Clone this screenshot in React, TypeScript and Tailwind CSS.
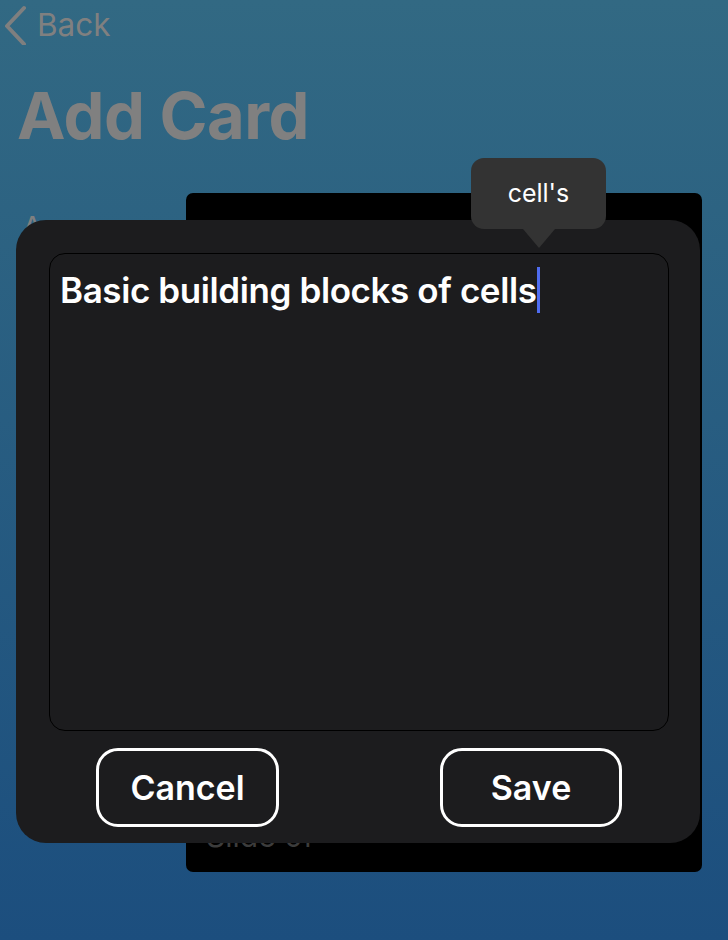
import React from "react";

export default function App() {
  return (
    <div
      className="relative w-[728px] h-[940px] overflow-hidden bg-gradient-to-b from-[#326983] to-[#1c4e7e]"
      style={{ fontFamily: "Inter, 'Noto Sans', sans-serif" }}
    >
      {/* Header */}
      <div className="flex items-center h-[48px] pl-[3px] pt-[1px]">
        <svg width="26" height="40" viewBox="0 0 26 40">
          <path d="M21 3 L4 21 L21 39" fill="none" stroke="#7f7f7f" strokeWidth="4" strokeLinecap="round" strokeLinejoin="round" />
        </svg>
        <span className="ml-[8px] text-[31.5px] leading-none text-[#808080]">Back</span>
      </div>
      <div className="pl-[17px] pt-[35px] text-[65px] font-bold leading-none text-[#808080] tracking-[-0.5px]">
        Add Card
      </div>
      <div className="pl-[22px] pt-[64px] text-[30px] text-[#808080] leading-none">A</div>

      {/* Black card behind */}
      <div className="absolute left-[186px] top-[193px] w-[516px] h-[679px] rounded-[7px] bg-black">
        <div className="absolute left-[20px] top-[628px] text-[30px] text-[#3c3c3c] leading-none">Slide 0f</div>
      </div>

      {/* Modal */}
      <div className="absolute left-[16px] top-[220px] w-[684px] h-[623px] rounded-[30px] bg-[#1c1c1e] flex flex-col pl-[33px] pr-[31px] pt-[33px]">
        <div className="h-[478px] rounded-[16px] border-[1.5px] border-black px-[10px] pt-[13px]">
          <div className="text-[35px] font-semibold text-white leading-[46px] tracking-[-0.4px]">
            Basic building blocks of cells
            <span className="inline-block align-middle w-[3px] h-[46px] bg-[#4f6cf0] -mt-[6px]" />
          </div>
        </div>
        <div className="flex justify-between pl-[47px] pr-[47px] mt-[17px]">
          <button className="w-[183px] h-[79px] rounded-[22px] border-[3px] border-white text-[34px] font-semibold text-white">
            Cancel
          </button>
          <button className="w-[182px] h-[79px] rounded-[22px] border-[3px] border-white text-[34px] font-semibold text-white">
            Save
          </button>
        </div>
      </div>

      {/* Tooltip */}
      <div className="absolute left-[471px] top-[158px] flex flex-col items-center">
        <div className="w-[135px] h-[71px] rounded-[13px] bg-[#333333] flex items-center justify-center text-[25px] text-white leading-none">
          cell's
        </div>
        <div className="w-0 h-0 border-l-[16px] border-r-[16px] border-t-[19px] border-l-transparent border-r-transparent border-t-[#333333]" />
      </div>
    </div>
  );
}
